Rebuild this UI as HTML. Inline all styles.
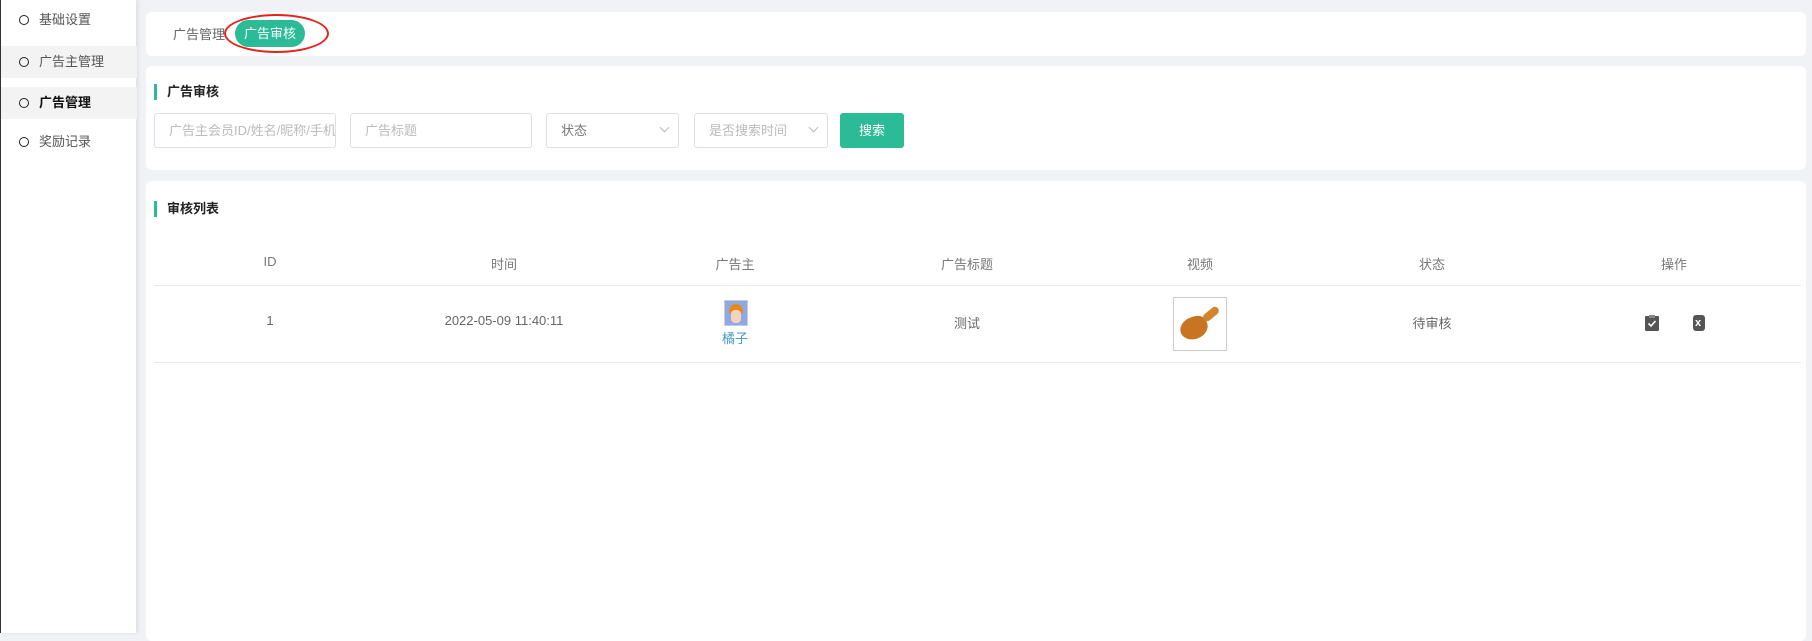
<!DOCTYPE html>
<html><head><meta charset="utf-8"><style>
*{margin:0;padding:0;box-sizing:border-box}
body{width:1812px;height:633px;overflow:hidden;background:#f0f2f5;font-family:"Liberation Sans","Noto Sans CJK SC",sans-serif;font-size:14px;color:#666;position:relative}
.side{position:absolute;left:0;top:0;width:136px;height:633px;background:#fff;border-left:1px solid #333;box-shadow:2px 0 4px rgba(0,0,0,.08)}
.it{position:absolute;left:0;width:136px;height:32px;line-height:32px;padding-left:38px;color:#555;font-size:13px}
.it:before{content:"";position:absolute;left:18px;top:11px;width:8px;height:8px;border:1.6px solid #222;border-radius:50%}
.card{position:absolute;left:146px;width:1660px;background:#fff;border-radius:6px}
.ttl{position:absolute;left:8px;font-weight:bold;color:#222;font-size:13px;padding-left:10px;border-left:3px solid #2bbb97;line-height:16px}
.inp{position:absolute;top:47px;height:35px;border:1px solid #dcdfe6;border-radius:3px;color:#bbb;font-size:13px;line-height:33px;padding-left:14px;overflow:hidden;white-space:nowrap}
.arr{position:absolute;right:10px;top:10px;width:7px;height:7px;border-right:1px solid #bbb;border-bottom:1px solid #bbb;transform:rotate(45deg)}
.th,.td{position:absolute;transform:translateX(-50%);white-space:nowrap;font-size:13px}
.th{top:73px;color:#777}
.td{top:132px;color:#666}
.ln{position:absolute;left:8px;width:1647px;height:1px;background:#e8eaee}
</style></head><body>
<div class="side">
<div class="it" style="top:4px">基础设置</div>
<div class="it" style="top:46px;background:#f3f3f3">广告主管理</div>
<div class="it" style="top:87px;background:#f3f3f3;color:#111;font-weight:bold">广告管理</div>
<div class="it" style="top:126px">奖励记录</div>
</div>
<div class="card" style="top:12px;height:44px">
<div style="position:absolute;left:27px;top:12px;font-size:13px;color:#666">广告管理</div>
<div style="position:absolute;left:89px;top:8px;width:70px;height:27px;border-radius:14px;background:#2bbb97;color:#fff;font-size:13px;line-height:27px;text-align:center">广告审核</div>
<div style="position:absolute;left:78px;top:2px;width:105px;height:39px;border:2px solid #e8221b;border-radius:50%"></div>
</div>
<div class="card" style="top:66px;height:104px">
<div class="ttl" style="top:18px">广告审核</div>
<div class="inp" style="left:8px;width:182px">广告主会员ID/姓名/昵称/手机</div>
<div class="inp" style="left:204px;width:182px">广告标题</div>
<div class="inp" style="left:400px;width:133px;color:#777">状态<span class="arr"></span></div>
<div class="inp" style="left:548px;width:134px">是否搜索时间<span class="arr"></span></div>
<div style="position:absolute;left:694px;top:47px;width:64px;height:35px;border-radius:3px;background:#2bbb97;color:#fff;font-size:13px;line-height:35px;text-align:center">搜索</div>
</div>
<div class="card" style="top:181px;height:460px">
<div class="ttl" style="top:20px">审核列表</div>
<div class="th" style="left:124px">ID</div>
<div class="th" style="left:358px">时间</div>
<div class="th" style="left:589px">广告主</div>
<div class="th" style="left:821px">广告标题</div>
<div class="th" style="left:1054px">视频</div>
<div class="th" style="left:1286px">状态</div>
<div class="th" style="left:1528px">操作</div>
<div class="ln" style="top:104px"></div>
<div class="td" style="left:124px">1</div>
<div class="td" style="left:358px">2022-05-09 11:40:11</div>
<div style="position:absolute;left:578px;top:119px;width:24px;height:26px;border:1px solid #ccc;background:#8fa8e8;overflow:hidden"><div style="position:absolute;left:4px;top:3px;width:14px;height:10px;background:#e88a1a;border-radius:7px 7px 2px 2px"></div><div style="position:absolute;left:6px;top:9px;width:10px;height:13px;background:#f3d2bf;border-radius:4px"></div></div>
<div class="td" style="left:589px;top:147px;color:#4a9ac4">橘子</div>
<div class="td" style="left:821px">测试</div>
<div style="position:absolute;left:1027px;top:116px;width:54px;height:54px;border:1px solid #ccc;background:#fff"><div style="position:absolute;left:6px;top:19px;width:28px;height:22px;background:#c97420;border-radius:50% 40% 50% 50%;transform:rotate(-20deg)"></div><div style="position:absolute;left:28px;top:12px;width:18px;height:8px;background:#d4852c;border-radius:4px;transform:rotate(-40deg)"></div></div>
<div class="td" style="left:1286px">待审核</div>
<svg style="position:absolute;left:1499px;top:134px" width="14" height="16" viewBox="0 0 14 16"><rect x="0" y="1" width="14" height="15" rx="1" fill="#555"/><rect x="4" y="0" width="6" height="3" fill="#888"/><path d="M3.5 8.5l2.5 2.5 4.5-5" stroke="#fff" stroke-width="1.6" fill="none"/></svg>
<div style="position:absolute;left:1547px;top:134px;width:12px;height:16px;background:#555;border-radius:3px"><span style="position:absolute;left:2px;top:1px;color:#fff;font-size:11px;font-weight:bold;line-height:14px">x</span></div>
<div class="ln" style="top:181px"></div>
</div>
</body></html>
